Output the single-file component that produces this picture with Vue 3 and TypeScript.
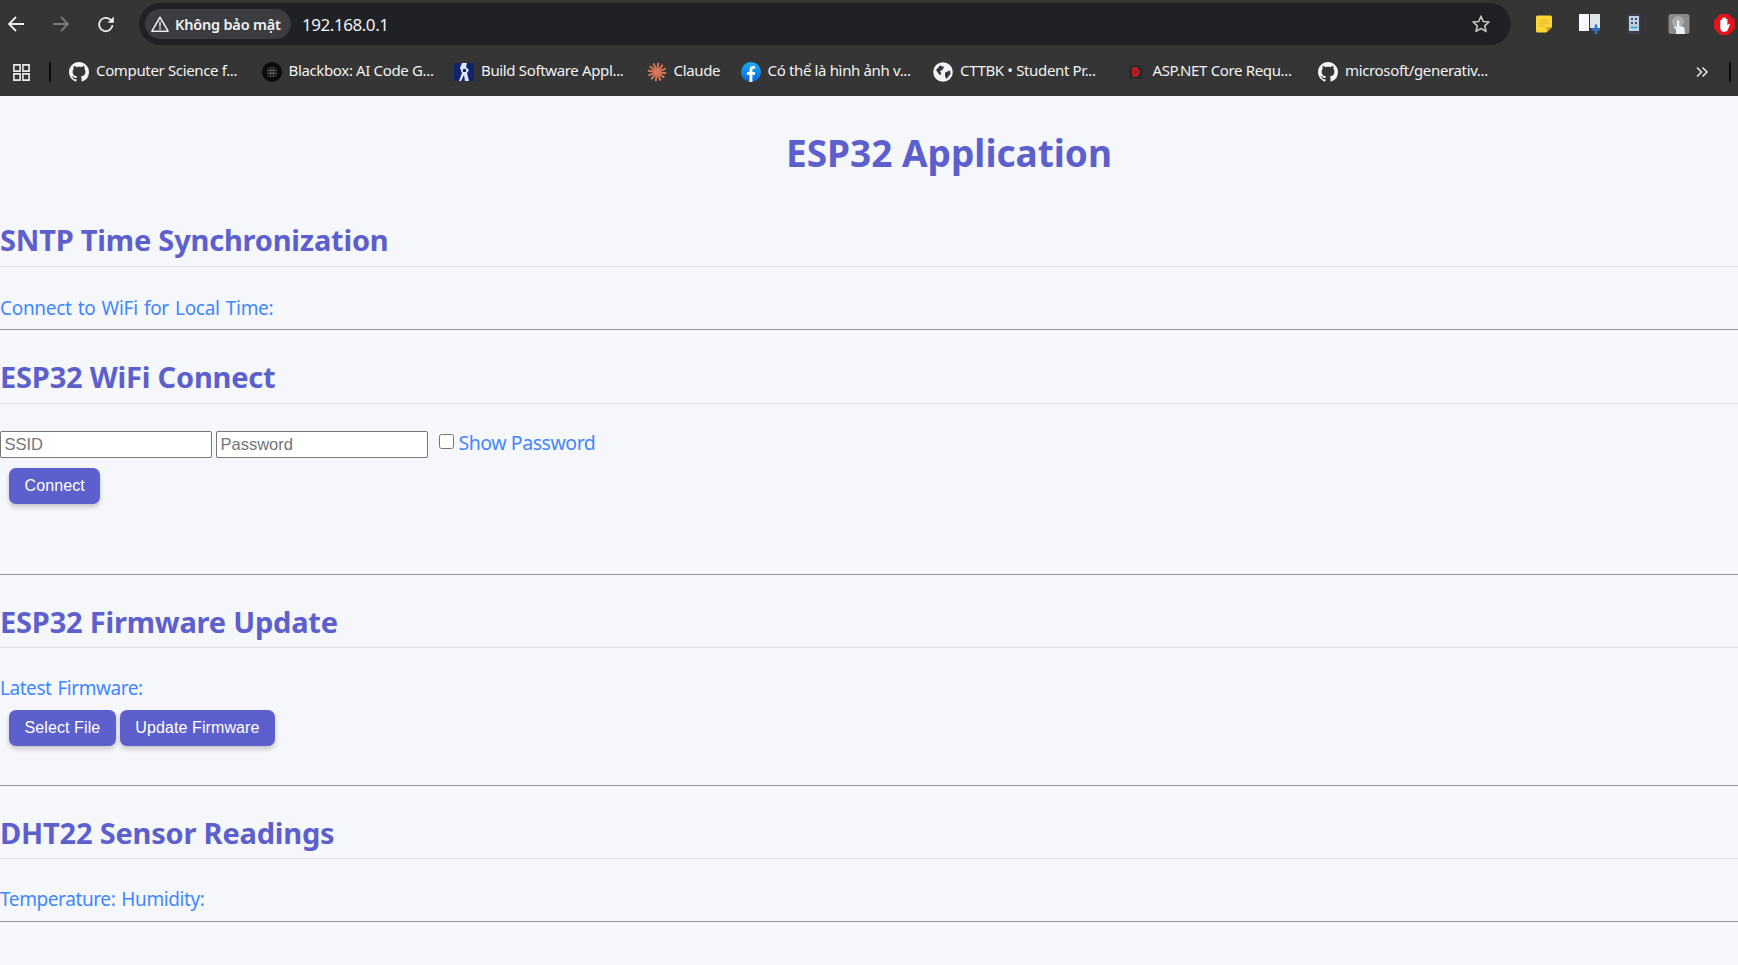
<script setup lang="ts">
import { ref } from 'vue'

interface Bookmark {
  label: string
  icon: string
  short?: boolean
}

const bookmarks: Bookmark[] = [
  { label: 'Computer Science f...', icon: 'github' },
  { label: 'Blackbox: AI Code G...', icon: 'blackbox' },
  { label: 'Build Software Appl...', icon: 'build' },
  { label: 'Claude', icon: 'claude', short: true },
  { label: 'Có thể là hình ảnh v...', icon: 'facebook' },
  { label: 'CTTBK • Student Pr...', icon: 'globe' },
  { label: 'ASP.NET Core Requ...', icon: 'asp' },
  { label: 'microsoft/generativ...', icon: 'github' },
]

const githubPath =
  'M8 0C3.58 0 0 3.58 0 8c0 3.54 2.29 6.53 5.47 7.59.4.07.55-.17.55-.38 0-.19-.01-.82-.01-1.49-2.01.37-2.53-.49-2.69-.94-.09-.23-.48-.94-.82-1.13-.28-.15-.68-.52-.01-.53.63-.01 1.08.58 1.23.82.72 1.21 1.87.87 2.33.66.07-.52.28-.87.51-1.07-1.78-.2-3.64-.89-3.64-3.95 0-.87.31-1.59.82-2.15-.08-.2-.36-1.02.08-2.12 0 0 .67-.21 2.2.82.64-.18 1.32-.27 2-.27s1.36.09 2 .27c1.53-1.04 2.2-.82 2.2-.82.44 1.1.16 1.92.08 2.12.51.56.82 1.27.82 2.15 0 3.07-1.87 3.75-3.65 3.95.29.25.54.73.54 1.48 0 1.07-.01 1.93-.01 2.2 0 .21.15.46.55.38A8.01 8.01 0 0 0 16 8c0-4.42-3.58-8-8-8z'

const rays = Array.from({ length: 12 }, (_, i) => i * 30 + 8)

// dot field of the Blackbox favicon, fading towards its rim
const offsets = [-4.5, -3, -1.5, 0, 1.5, 3, 4.5]
const dots = offsets
  .flatMap((x) => offsets.map((y) => ({ x, y, d: Math.hypot(x, y) })))
  .filter((dot) => dot.d < 5.6)

const ssid = ref('')
const password = ref('')
const showPassword = ref(false)
</script>

<template>
  <div class="page">
    <header class="chrome">
      <div class="toolbar">
        <svg class="nav" viewBox="0 0 20 20"><path d="M18 10H3.500M10 3 3 10l7 7" fill="none" stroke="#e8eaed" stroke-width="1.800" /></svg>
        <svg class="nav" viewBox="0 0 20 20"><path d="M2 10h14.500M10 3l7 7-7 7" fill="none" stroke="#7b7c7f" stroke-width="1.800" /></svg>
        <svg class="nav" viewBox="0 0 20 20"><path d="M16.500 11a6.700 6.700 0 1 1-2-5.300L17 8" fill="none" stroke="#e8eaed" stroke-width="1.800" /><path d="M17.800 2.500v6.300h-6.300z" fill="#e8eaed" /></svg>
        <div class="omnibox">
          <div class="chip">
            <svg class="warn" viewBox="0 0 20 20"><path d="M10 2.500 19 18H1z" fill="none" stroke="#e8eaed" stroke-width="1.700" stroke-linejoin="round" /><path d="M10 7.500v5.500M10 14v2" stroke="#e8eaed" stroke-width="1.600" /></svg>
            <span>Không bảo mật</span>
          </div>
          <span class="url">192.168.0.1</span>
          <svg class="star" viewBox="0 0 20 20"><path d="m10 2.200 2.300 5.300 5.700.5-4.300 3.800 1.300 5.600L10 14.500l-5 2.900 1.300-5.600L2 8l5.700-.5z" fill="none" stroke="#c4c7c5" stroke-width="1.600" stroke-linejoin="round" /></svg>
        </div>
        <div class="extensions">
          <svg viewBox="0 0 20 20"><path d="M2 3q0-1.500 1.500-1.500h13q1.500 0 1.500 1.500v10l-5.500 5.500h-9Q2 18.500 2 17z" fill="#fdd835" /><path d="M5 6h10M5 9h10M5 12h6" stroke="#f3a93b" stroke-width="1.100" /><path d="M18 13h-5.500v5.500z" fill="#d9a520" /></svg>
          <svg viewBox="0 0 20 20"><path d="M0 0h10v17H0z" fill="#f6f8fb" /><path d="M11 0h10v14H11z" fill="#dfe4ea" /><path d="M17 10.500v9.500M12.500 15.500h8.500" stroke="#2a77c9" stroke-width="2.400" /></svg>
          <svg viewBox="0 0 20 20"><rect x="3.500" y="0" width="13" height="20" rx="1.500" fill="#3d3e52" /><rect x="5" y="2" width="10" height="15" fill="#bcd0df" /><path d="M7 4h2v2H7zM11 4h2v2h-2zM7 8h2v2H7zM11 8h2v2h-2z" fill="#44506a" /><path d="M6.500 13.500h7" stroke="#2fa6d6" stroke-width="1.500" /></svg>
          <svg viewBox="0 0 20 20"><rect x="-0.500" width="21" height="20" rx="2.500" fill="#88898b" /><circle cx="9" cy="8" r="6" fill="#a9aaac" /><path d="M7 20v-4.500L4.500 13l1-1 2.500 1.500V7q1.200-1.500 2.300 0v5l5 1.200.7 6.800z" fill="#eef1f4" /></svg>
          <svg class="stop" viewBox="0 0 20 20"><path d="M6 0h8l6 6v8l-6 6H6l-6-6V6z" fill="#e0141c" /><path d="M6 10V6q1-1 1.700 0V4q1-1 1.700 0v-.5q1-1 1.700 0V5q1-1 1.700 0v6l1.200-1.500q1.200-.5 1.200.6L13 15.500q-1 1.500-3 1.500-4 0-4-4z" fill="#fff" /></svg>
        </div>
      </div>
      <nav class="bookmarks">
        <svg class="apps" viewBox="0 0 20 20"><path d="M2 2h6.500v6.500H2zM11.500 2H18v6.500h-6.500zM2 11.500h6.500V18H2zM11.500 11.500H18V18h-6.500z" fill="none" stroke="#e8eaed" stroke-width="1.700" /></svg>
        <span class="divider"></span>
        <a v-for="(item, index) in bookmarks" :key="index" class="bookmark" :class="{ short: item.short }">
          <svg class="favicon" :viewBox="item.icon === 'github' ? '0 0 16 16' : '0 0 20 20'">
            <path v-if="item.icon === 'github'" :d="githubPath" fill="#f1f3f4" />
            <g v-else-if="item.icon === 'blackbox'">
              <circle cx="10" cy="10" r="10" fill="#0b0b0d" />
              <circle
                v-for="(dot, i) in dots"
                :key="i"
                :cx="10 + dot.x"
                :cy="10 + dot.y"
                r="0.600"
                fill="#fff"
                :opacity="0.75 - dot.d * 0.09"
              />
            </g>
            <g v-else-if="item.icon === 'build'">
              <rect x="0" y="1" width="20" height="18" fill="#12246e" />
              <path d="M8 1h5l-1 4 3 3-2 3 2 8h-4l-1-6-3 6H5l3-8-2-5z" fill="#dfe7f5" />
              <path d="M9 7h3v3H9z" fill="#12246e" />
            </g>
            <g v-else-if="item.icon === 'claude'" stroke="#d97757" stroke-width="2" stroke-linecap="round">
              <line v-for="deg in rays" :key="deg" x1="10" y1="10" x2="10" y2="1.500" :transform="`rotate(${deg} 10 10)`" />
            </g>
            <g v-else-if="item.icon === 'facebook'">
              <defs>
                <linearGradient id="fb" x1="0" y1="0" x2="0" y2="1">
                  <stop offset="0" stop-color="#19aff4" />
                  <stop offset="1" stop-color="#0866e0" />
                </linearGradient>
              </defs>
              <circle cx="10" cy="10" r="10" fill="url(#fb)" />
              <path d="M8.500 20v-7H6v-3h2.500V7.800C8.500 5.300 10 4 12.200 4c1 0 1.900.2 1.900.2v2.500h-1.200c-1.200 0-1.500.7-1.500 1.500V10h2.700l-.4 3h-2.300v7z" fill="#fff" />
            </g>
            <g v-else-if="item.icon === 'globe'">
              <circle cx="10" cy="10" r="9.800" fill="#f1f3f4" />
              <path d="M3 8l4-4.500 4 1.500-1.500 3-2.500 1 1.500 3-2 1zM12 10.500l5-2 .5 3.500-4 5-1.500-3z" fill="#35363a" />
            </g>
            <g v-else>
              <rect x="3" y="3" width="14" height="14" rx="1.500" fill="#2a2b2d" />
              <path d="M6.500 5.500h4.500l3 4.500-3 4.500H6.500zM9 8v4l2.500-2z" fill="#e0141c" fill-rule="evenodd" />
            </g>
          </svg>
          <span>{{ item.label }}</span>
        </a>
        <svg class="more" viewBox="0 0 14 14"><path d="m2 2.500 4.500 4.500L2 11.500M7.500 2.500 12 7l-4.500 4.500" fill="none" stroke="#e8eaed" stroke-width="1.500" /></svg>
        <span class="divider end"></span>
      </nav>
    </header>

    <main class="content">
      <h1>ESP32 Application</h1>

      <section>
        <h2>SNTP Time Synchronization</h2>
        <p>Connect to WiFi for Local Time:</p>
      </section>
      <hr />

      <section>
        <h2>ESP32 WiFi Connect</h2>
        <div class="wifi-row">
          <input v-model="ssid" type="text" placeholder="SSID" />
          <input v-model="password" :type="showPassword ? 'text' : 'password'" placeholder="Password" />
          <label class="show">
            <input v-model="showPassword" type="checkbox" />
            <span>Show Password</span>
          </label>
        </div>
        <div class="actions connect-actions">
          <button type="button">Connect</button>
        </div>
      </section>
      <hr />

      <section>
        <h2 class="tight">ESP32 Firmware Update</h2>
        <p class="firmware">Latest Firmware:</p>
        <div class="actions firmware-actions">
          <button type="button">Select File</button>
          <button type="button">Update Firmware</button>
        </div>
      </section>
      <hr />

      <section>
        <h2 class="tight">DHT22 Sensor Readings</h2>
        <p class="sensors">Temperature: Humidity:</p>
      </section>
      <hr />
    </main>
  </div>
</template>

<style>
html,
body {
  margin: 0;
  background: #f5f7fb;
  overflow: hidden;
}
</style>

<style scoped>
.page {
  min-height: 965px;
  background: #f5f7fb;
  font-family: "Noto Sans", "Liberation Sans", sans-serif;
}

.chrome {
  background: #353535;
  color: #f1f3f4;
}

.toolbar {
  height: 48px;
  display: flex;
  align-items: center;
  padding-left: 6px;
  box-sizing: border-box;
}

.nav {
  width: 20px;
  height: 20px;
  margin-right: 25px;
}

.omnibox {
  width: 1372px;
  height: 42px;
  margin-left: -2px;
  border-radius: 21px;
  background: #202124;
  display: flex;
  align-items: center;
  padding: 0 6px;
  box-sizing: border-box;
}

.chip {
  height: 30px;
  width: 146px;
  flex: none;
  box-sizing: border-box;
  border-radius: 15px;
  background: #3b3c3f;
  display: flex;
  align-items: center;
  gap: 6px;
  padding-left: 6px;
  font-size: 14.500px;
  font-weight: 600;
  letter-spacing: -0.2px;
  white-space: nowrap;
}

.warn {
  width: 18px;
  height: 18px;
}

.url {
  margin-left: 11px;
  font-size: 17px;
  letter-spacing: -0.45px;
}

.star {
  width: 20px;
  height: 20px;
  margin-left: auto;
  margin-right: 14px;
}

.extensions {
  display: flex;
  align-items: center;
  gap: 25px;
  margin-left: 23px;
}

.extensions svg {
  width: 20px;
  height: 20px;
  flex: none;
  overflow: visible;
}

.extensions .stop {
  width: 21px;
  height: 21px;
}

.bookmarks {
  height: 48px;
  display: flex;
  align-items: center;
  padding-left: 12px;
  box-sizing: border-box;
  font-size: 15px;
  letter-spacing: -0.35px;
}

.apps {
  width: 19px;
  height: 19px;
}

.divider {
  width: 2px;
  height: 20px;
  background: #0b0b0c;
  margin-left: 18px;
  margin-right: 18px;
  flex: none;
}

.bookmark {
  display: flex;
  align-items: center;
  gap: 7px;
  width: 192.500px;
  flex: none;
  white-space: nowrap;
}

.bookmark.short {
  width: 94px;
}

.bookmark span {
  margin-top: -5px;
}

.favicon {
  width: 20px;
  height: 20px;
  flex: none;
}

.more {
  margin-left: auto;
  width: 14px;
  height: 14px;
}

.divider.end {
  margin-left: 20px;
  margin-right: 7px;
}

.content {
  padding-top: 33px;
}

h1 {
  margin: 0 0 43px;
  padding-left: 160px;
  text-align: center;
  color: #5c5fcc;
  font-size: 37px;
  line-height: 48px;
  letter-spacing: 0;
  font-weight: 700;
}

h2 {
  margin: 0 0 28px;
  padding-bottom: 6px;
  border-bottom: 1px solid #dfe1e8;
  color: #5c5fcc;
  font-size: 29px;
  line-height: 40px;
  letter-spacing: -0.2px;
  font-weight: 700;
}

h2.tight {
  padding-bottom: 5px;
}

p {
  margin: 0;
  color: #4287ff;
  font-size: 19px;
  line-height: 26px;
  letter-spacing: -0.3px;
  word-spacing: 1.500px;
}

hr {
  margin: 8px 0 27px;
  height: 0;
  border: 0;
  border-top: 1px solid #949494;
}

.wifi-row {
  display: flex;
  align-items: center;
  height: 27px;
  margin-top: -1px;
}

.wifi-row input[type='text'],
.wifi-row input[type='password'] {
  width: 211.500px;
  height: 27px;
  box-sizing: border-box;
  margin-right: 4.500px;
  padding: 1px 3.500px;
  border: 1.500px solid #767676;
  border-radius: 2px;
  background: #fff;
  font-family: "Liberation Sans", Arial, sans-serif;
  font-size: 16.500px;
}

.wifi-row input::placeholder {
  color: #757575;
}

.show {
  display: flex;
  align-items: center;
  margin-left: 1.500px;
  color: #4287ff;
  font-size: 19.500px;
  letter-spacing: -0.45px;
  margin-top: -5px;
}

.show input {
  width: 15px;
  height: 15px;
  margin: 0 5px 2px 5px;
  accent-color: #5c5fcc;
}

.actions {
  display: flex;
  gap: 4px;
  padding-left: 9px;
}

.connect-actions {
  margin-top: 10px;
  margin-bottom: 70px;
}

.firmware {
  margin-top: -1px;
  letter-spacing: -0.45px;
}

.sensors {
  margin-top: -1px;
  padding-bottom: 1px;
  letter-spacing: -0.4px;
}

.firmware-actions {
  margin-top: 9px;
  margin-bottom: 39px;
}

button {
  height: 36px;
  padding: 0 15.500px;
  border: 0;
  border-radius: 7px;
  background: #5c5fcc;
  color: #fff;
  font-family: "Liberation Sans", Arial, sans-serif;
  font-size: 16px;
  letter-spacing: 0.1px;
  box-shadow: 0 3px 5px rgba(0, 0, 0, 0.2);
}
</style>
